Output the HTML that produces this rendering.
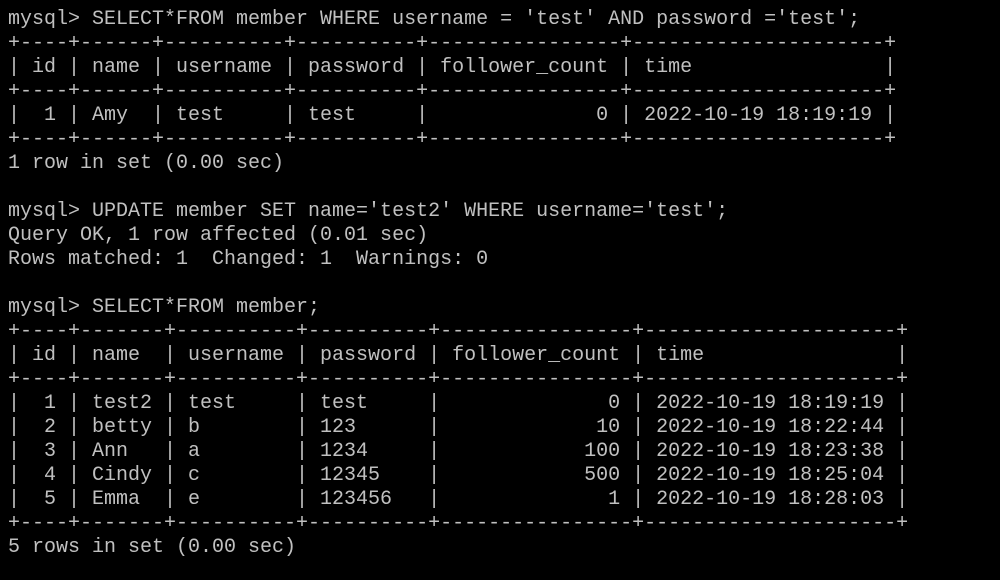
<!DOCTYPE html>
<html><head><meta charset="utf-8"><style>
html,body{margin:0;padding:0;background:#000;width:1000px;height:580px;overflow:hidden}
pre{margin:0;padding:8px 0 0 8px;color:#c0c0c0;font-family:"Liberation Mono",monospace;font-size:20px;line-height:24px;letter-spacing:0}
</style></head><body><pre>mysql&gt; SELECT*FROM member WHERE username = 'test' AND password ='test';
+----+------+----------+----------+----------------+---------------------+
| id | name | username | password | follower_count | time                |
+----+------+----------+----------+----------------+---------------------+
|  1 | Amy  | test     | test     |              0 | 2022-10-19 18:19:19 |
+----+------+----------+----------+----------------+---------------------+
1 row in set (0.00 sec)

mysql&gt; UPDATE member SET name='test2' WHERE username='test';
Query OK, 1 row affected (0.01 sec)
Rows matched: 1  Changed: 1  Warnings: 0

mysql&gt; SELECT*FROM member;
+----+-------+----------+----------+----------------+---------------------+
| id | name  | username | password | follower_count | time                |
+----+-------+----------+----------+----------------+---------------------+
|  1 | test2 | test     | test     |              0 | 2022-10-19 18:19:19 |
|  2 | betty | b        | 123      |             10 | 2022-10-19 18:22:44 |
|  3 | Ann   | a        | 1234     |            100 | 2022-10-19 18:23:38 |
|  4 | Cindy | c        | 12345    |            500 | 2022-10-19 18:25:04 |
|  5 | Emma  | e        | 123456   |              1 | 2022-10-19 18:28:03 |
+----+-------+----------+----------+----------------+---------------------+
5 rows in set (0.00 sec)
</pre></body></html>
